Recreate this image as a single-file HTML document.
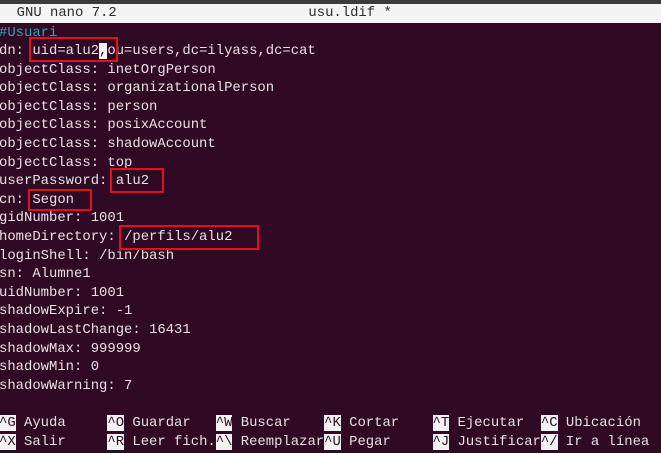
<!DOCTYPE html>
<html><head><meta charset="utf-8"><style>
html,body{margin:0;padding:0;}
body{width:661px;height:453px;overflow:hidden;background:#300a24;position:relative;font-family:"Liberation Mono",monospace;font-size:13.9px;color:#e6e1e3;}
.top{position:absolute;left:0;top:0;width:661px;height:4px;background:#3b3b3b;}
.title{position:absolute;left:0;top:4px;width:661px;height:19px;background:#f4f4f4;color:#2c2c2c;line-height:19px;white-space:pre;}
.lines{position:absolute;left:-1px;top:23.5px;white-space:pre;line-height:18.6px;}
.c{color:#3aa0b4;}
.k{background:#f2f2f2;color:#300a24;}
.box{position:absolute;border:2px solid #e0101e;box-sizing:border-box;}
.cur{background:#f2f2f2;color:#300a24;}
</style></head><body>
<div class="top"></div>
<div class="title">  GNU nano 7.2                       usu.ldif *</div>
<div class="lines"><span class="c">#Usuari</span>
dn: uid=alu2<span class="cur">,</span>ou=users,dc=ilyass,dc=cat
objectClass: inetOrgPerson
objectClass: organizationalPerson
objectClass: person
objectClass: posixAccount
objectClass: shadowAccount
objectClass: top
userPassword: alu2
cn: Segon
gidNumber: 1001
homeDirectory: /perfils/alu2
loginShell: /bin/bash
sn: Alumne1
uidNumber: 1001
shadowExpire: -1
shadowLastChange: 16431
shadowMax: 999999
shadowMin: 0
shadowWarning: 7

<span class="k">^G</span> Ayuda     <span class="k">^O</span> Guardar   <span class="k">^W</span> Buscar    <span class="k">^K</span> Cortar    <span class="k">^T</span> Ejecutar  <span class="k">^C</span> Ubicación
<span class="k">^X</span> Salir     <span class="k">^R</span> Leer fich.<span class="k">^\</span> Reemplazar<span class="k">^U</span> Pegar     <span class="k">^J</span> Justificar<span class="k">^/</span> Ir a línea</div>
<div class="box" style="left:29px;top:37px;width:89px;height:25px;"></div>
<div class="box" style="left:110px;top:168px;width:54px;height:25px;"></div>
<div class="box" style="left:28px;top:189px;width:64px;height:22px;"></div>
<div class="box" style="left:119px;top:225px;width:140px;height:25px;"></div>
</body></html>
